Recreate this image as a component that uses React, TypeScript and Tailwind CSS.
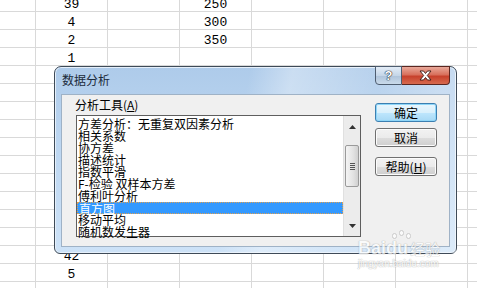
import React from "react";

const cjk = { fontFamily: '"Noto Sans CJK SC", "Noto Sans", sans-serif' };
const mono = { fontFamily: '"Liberation Mono", monospace' };

const rowsA: Record<number, string> = { 0: "39", 1: "4", 2: "2", 3: "1", 14: "42", 15: "5" };
const rowsC: Record<number, string> = { 0: "250", 1: "300", 2: "350" };

const items = [
  "方差分析：无重复双因素分析",
  "相关系数",
  "协方差",
  "描述统计",
  "指数平滑",
  "F-检验 双样本方差",
  "傅利叶分析",
  "直方图",
  "移动平均",
  "随机数发生器",
];

function Sheet() {
  const rows = Array.from({ length: 17 }, (_, i) => i);
  return (
    <div className="mt-[-6px] flex flex-col" style={mono}>
      {rows.map((r) => (
        <div key={r} className="flex h-[18px] shrink-0">
          <div className="h-full w-[36px] shrink-0 border-r border-b border-[#d9d9d9]" />
          {Array.from({ length: 7 }, (_, c) => (
            <div
              key={c}
              className="flex h-full w-[72px] shrink-0 items-center justify-center border-r border-b border-[#d9d9d9] pt-[3px] text-[13px] leading-none text-black"
            >
              {c === 0 ? rowsA[r] ?? "" : c === 2 ? rowsC[r] ?? "" : ""}
            </div>
          ))}
        </div>
      ))}
    </div>
  );
}

function Btn({ label, def }: { label: React.ReactNode; def?: boolean }) {
  return (
    <div
      className={
        "flex h-[19px] w-[62px] items-center justify-center rounded-[3px] border text-[12px] leading-none text-black " +
        (def
          ? "border-[#3c7fb1] bg-[linear-gradient(#eaf6fd_0%,#d9f0fc_50%,#bee6fd_51%,#a7d9f5_100%)] shadow-[inset_0_0_0_1px_#8fd6f8]"
          : "border-[#707070] bg-[linear-gradient(#f2f2f2_0%,#ebebeb_50%,#dddddd_51%,#cfcfcf_100%)] shadow-[inset_0_0_0_1px_#fcfcfc]")
      }
      style={cjk}
    >
      {label}
    </div>
  );
}

function ListBox() {
  return (
    <div className="relative flex h-[122px] w-[285px] border border-[#5e5e5e] bg-white">
      <div className="flex-1 pt-[2px]" style={cjk}>
        {items.map((t, i) => (
          <div
            key={i}
            className={
              "h-[12px] whitespace-nowrap pl-[1px] text-[12px] leading-[12px] " +
              (i === 7 ? "border border-dotted border-[#e0a050] bg-[#3399ff] pl-0 leading-[10px] text-white" : "text-black")
            }
          >
            {t}
          </div>
        ))}
      </div>
      <div className="flex w-[17px] shrink-0 flex-col items-center border-l border-[#e0e0e0] bg-[#ececec]">
        <div className="flex h-[17px] w-full items-center justify-center pt-[4px]">
          <svg width="7" height="4" viewBox="0 0 7 4">
            <path d="M0 4 L3.5 0 L7 4 Z" fill="#333" />
          </svg>
        </div>
        <div className="mt-[12px] flex h-[42px] w-[14px] items-center justify-center rounded-[2px] border border-[#9a9a9a] bg-[linear-gradient(90deg,#f4f4f4,#e2e2e2_60%,#d0d0d0)]">
          <div className="flex flex-col gap-[1px]">
            <div className="h-[1px] w-[5px] bg-[#555]" />
            <div className="h-[1px] w-[5px] bg-[#555]" />
            <div className="h-[1px] w-[5px] bg-[#555]" />
            <div className="h-[1px] w-[5px] bg-[#555]" />
          </div>
        </div>
        <div className="flex-1" />
        <div className="flex h-[17px] w-full items-center justify-center pb-[4px]">
          <svg width="7" height="4" viewBox="0 0 7 4">
            <path d="M0 0 L3.5 4 L7 0 Z" fill="#333" />
          </svg>
        </div>
      </div>
    </div>
  );
}

function Dialog() {
  return (
    <div className="absolute left-[54px] top-[66px] flex h-[188px] w-[403px] flex-col rounded-t-[7px] rounded-b-[6px] border border-[#3e4a57] bg-[linear-gradient(180deg,#aecbea_0%,#bcd6f1_40%,#cde2f7_100%)] shadow-[inset_0_0_0_1px_#e6f0fb]">
      <div className="absolute inset-0 rounded-t-[7px] bg-[linear-gradient(100deg,rgba(255,255,255,0)_0%,rgba(255,255,255,0)_45%,rgba(255,255,255,0.35)_55%,rgba(255,255,255,0.1)_75%,rgba(255,255,255,0.3)_90%)]" />
      {/* title bar */}
      <div className="relative flex h-[27px] shrink-0 items-start pl-[7px] pt-[7px]">
        <span className="text-[12px] leading-[12px] text-[#1b2a3a]" style={cjk}>
          数据分析
        </span>
        <div className="absolute right-[6px] top-[-1px] flex">
          <div className="flex h-[19px] w-[27px] items-center justify-center rounded-bl-[4px] border border-[#4e5d70] bg-[linear-gradient(#e4edf7_0%,#c5d6e8_50%,#aec3da_51%,#c9daea_100%)]">
            <span
              className="text-[13px] font-bold leading-none text-white [text-shadow:0_0_1px_#1a2533,0_0_1px_#1a2533,0_0_1px_#1a2533]"
              style={{ fontFamily: '"Liberation Sans", sans-serif' }}
            >
              ?
            </span>
          </div>
          <div className="flex h-[19px] w-[48px] items-center justify-center rounded-br-[4px] border border-l-0 border-[#5a2620] bg-[linear-gradient(#e9a99a_0%,#d8705c_45%,#c7412c_55%,#d76a4e_100%)]">
            <svg width="13" height="11" viewBox="0 0 13 11">
              <path
                d="M1 1 L4.5 1 L6.5 3.5 L8.5 1 L12 1 L8.3 5.5 L12 10 L8.5 10 L6.5 7.5 L4.5 10 L1 10 L4.7 5.5 Z"
                fill="#fff"
                stroke="#3a1a15"
                strokeWidth="0.9"
              />
            </svg>
          </div>
        </div>
      </div>
      {/* client */}
      <div className="relative mx-[6px] mb-[6px] flex flex-1 border border-[#9fb2c6] bg-[#f0f0f0]">
        <div className="flex flex-col pl-[13px] pt-[4px]">
          <div className="h-[12px] text-[12px] leading-[12px] text-black" style={cjk}>
            分析工具(<span className="underline">A</span>)
          </div>
          <div className="mt-[4px] ml-[1px]">
            <ListBox />
          </div>
        </div>
        <div className="ml-[14px] flex flex-col gap-[6px] pt-[8px]">
          <Btn label="确定" def />
          <Btn label="取消" />
          <div className="mt-[4px]">
            <Btn
              label={
                <span>
                  帮助(<span className="underline">H</span>)
                </span>
              }
            />
          </div>
        </div>
      </div>
    </div>
  );
}

function Watermark() {
  return (
    <div className="pointer-events-none absolute left-[358px] top-[230px] flex flex-col items-start opacity-70">
      <div className="ml-[34px] flex items-end gap-[2px]">
        <div className="h-[6px] w-[5px] rounded-full border border-[#bbb] bg-white" />
        <div className="mb-[3px] h-[6px] w-[5px] rounded-full border border-[#bbb] bg-white" />
        <div className="h-[6px] w-[5px] rounded-full border border-[#bbb] bg-white" />
      </div>
      <div className="flex items-center leading-none">
        <span
          className="text-[18px] font-bold text-white [text-shadow:0_0_1px_#999,0_0_1px_#999]"
          style={{ fontFamily: '"Liberation Sans", sans-serif' }}
        >
          Bai
        </span>
        <span
          className="text-[18px] font-bold text-white [text-shadow:0_0_1px_#999,0_0_1px_#999]"
          style={{ fontFamily: '"Liberation Sans", sans-serif' }}
        >
          du
        </span>
        <span className="ml-[2px] text-[15px] text-white [text-shadow:0_0_1px_#999,0_0_1px_#999]" style={cjk}>
          经验
        </span>
      </div>
      <div
        className="mt-[2px] text-[10px] leading-none text-white [text-shadow:0_0_1px_#999,0_0_1px_#999]"
        style={{ fontFamily: '"Liberation Sans", sans-serif' }}
      >
        jingyan.baidu.com
      </div>
    </div>
  );
}

export default function App() {
  return (
    <div className="relative h-[288px] w-[477px] overflow-hidden bg-white">
      <Sheet />
      <Dialog />
      <Watermark />
    </div>
  );
}
